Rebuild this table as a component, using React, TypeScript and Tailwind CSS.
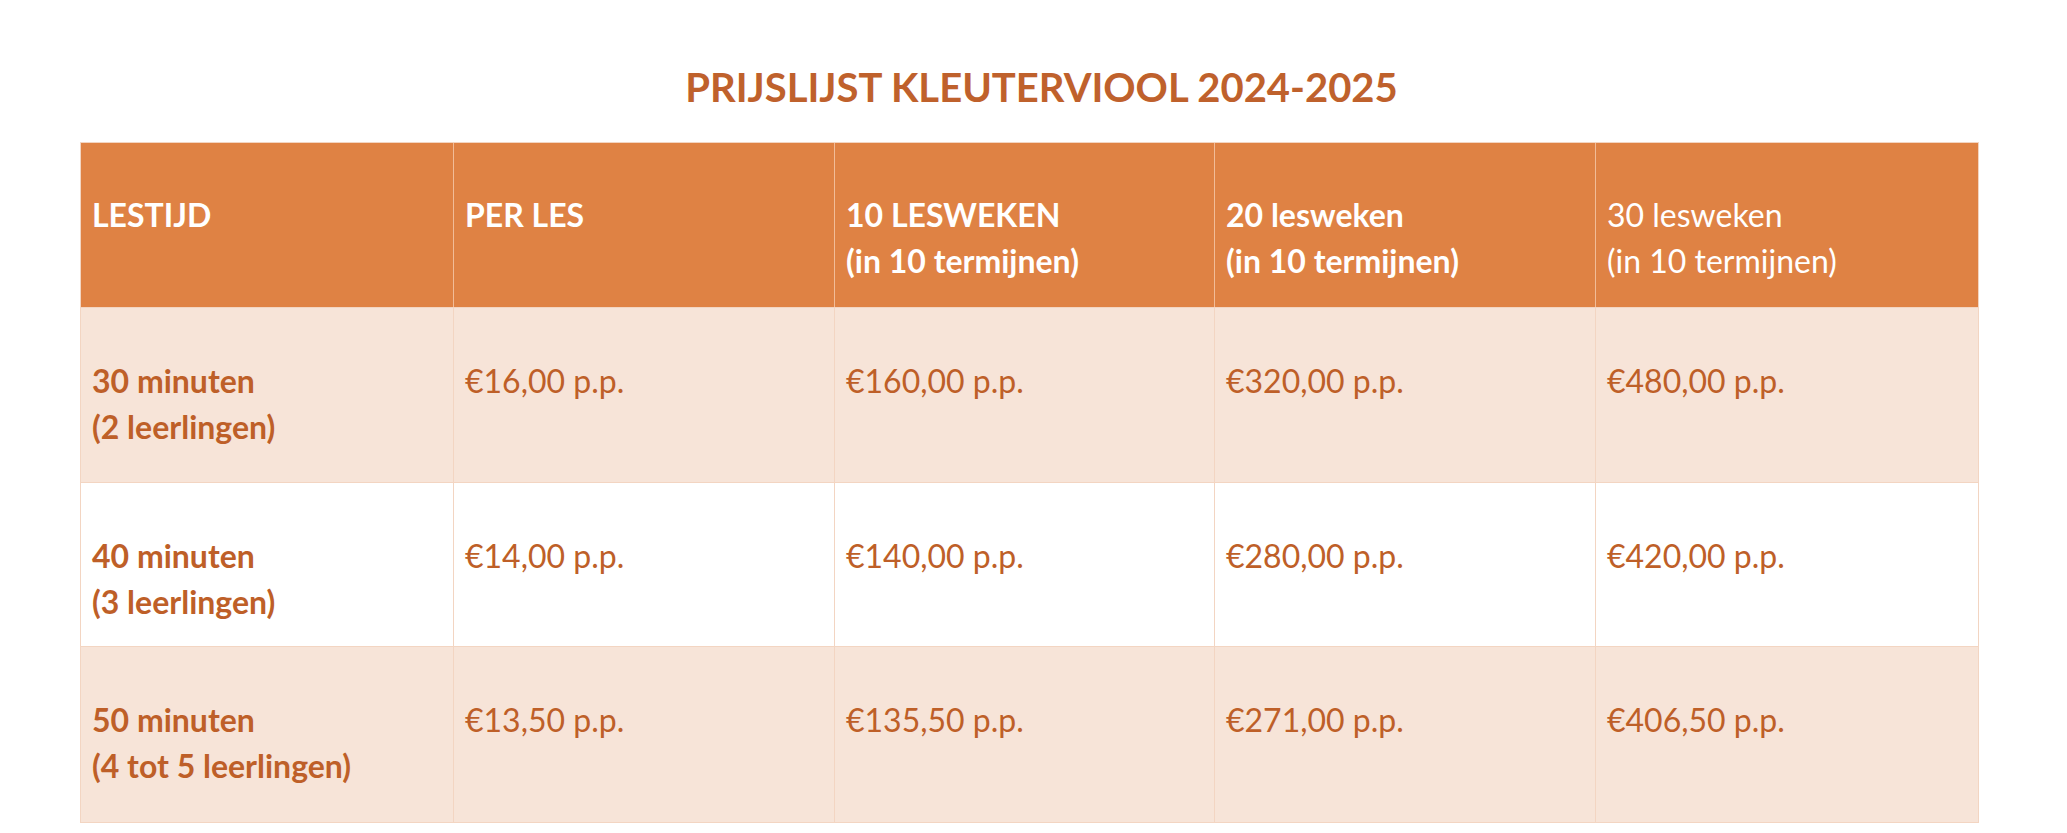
const headers = [
  { lines: ['LESTIJD'], bold: true },
  { lines: ['PER LES'], bold: true },
  { lines: ['10 LESWEKEN', '(in 10 termijnen)'], bold: true },
  { lines: ['20 lesweken', '(in 10 termijnen)'], bold: true },
  { lines: ['30 lesweken', '(in 10 termijnen)'], bold: false },
]

const rows = [
  {
    label: ['30 minuten', '(2 leerlingen)'],
    prices: ['€16,00 p.p.', '€160,00 p.p.', '€320,00 p.p.', '€480,00 p.p.'],
    shaded: true,
    height: 'h-[175px]',
  },
  {
    label: ['40 minuten', '(3 leerlingen)'],
    prices: ['€14,00 p.p.', '€140,00 p.p.', '€280,00 p.p.', '€420,00 p.p.'],
    shaded: false,
    height: 'h-[164px]',
  },
  {
    label: ['50 minuten', '(4 tot 5 leerlingen)'],
    prices: ['€13,50 p.p.', '€135,50 p.p.', '€271,00 p.p.', '€406,50 p.p.'],
    shaded: true,
    height: 'h-[176px]',
  },
]

export default function App() {
  return (
    <div className="w-[2067px] h-[833px] bg-white font-['Lato',sans-serif] overflow-hidden">
      {/* Title */}
      <h1 className="pt-[63px] pl-[16px] text-center text-[40px] leading-[48px] font-bold text-[#BF612C]">
        PRIJSLIJST KLEUTERVIOOL 2024-2025
      </h1>

      {/* Price table */}
      <div className="ml-[80px] mt-[31px] w-[1899px] border-t border-l border-r border-[#F3D5C2]">
        <div className="grid grid-cols-[373px_381px_380px_381px_382px] h-[165px] bg-[#DF8244] border-b border-[#F3D5C2]">
          {headers.map((h, i) => (
            <div
              key={i}
              className={`px-[11px] pt-[49px] text-[32px] leading-[46px] text-white ${h.bold ? 'font-bold' : 'font-normal'} ${i < 4 ? 'border-r border-[#F2BC97]' : ''}`}
            >
              {h.lines.map((l) => (
                <div key={l}>{l}</div>
              ))}
            </div>
          ))}
        </div>

        {rows.map((r, ri) => (
          <div
            key={ri}
            className={`grid grid-cols-[373px_381px_380px_381px_382px] ${r.height} border-b border-[#F3D5C2] ${r.shaded ? 'bg-[#F7E4D8]' : 'bg-white'}`}
          >
            <div className="px-[11px] pt-[50px] text-[32px] leading-[46px] font-bold text-[#BE5F28] border-r border-[#F3D5C2]">
              {r.label.map((l) => (
                <div key={l}>{l}</div>
              ))}
            </div>
            {r.prices.map((p, pi) => (
              <div
                key={pi}
                className={`px-[11px] pt-[50px] text-[32px] leading-[46px] text-[#BE5F28] ${pi < 3 ? 'border-r border-[#F3D5C2]' : ''}`}
              >
                {p}
              </div>
            ))}
          </div>
        ))}
      </div>
    </div>
  )
}
